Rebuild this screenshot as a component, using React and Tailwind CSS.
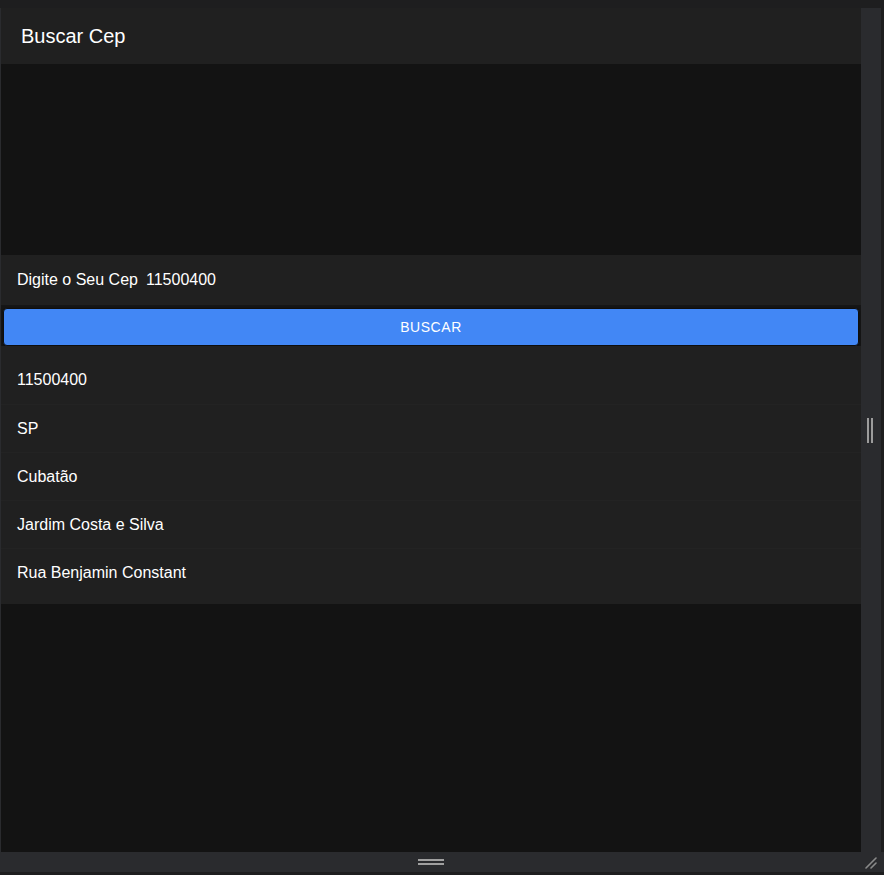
import React from 'react';

const items = ['11500400', 'SP', 'Cubatão', 'Jardim Costa e Silva', 'Rua Benjamin Constant'];

function App() {
  return (
    <div className="w-[884px] h-[875px] bg-[#1b1b1c] flex flex-col overflow-hidden font-['Liberation_Sans',Arial,sans-serif] text-white">
      {/* window top edge */}
      <div className="h-2 shrink-0 bg-[#1e1e1f]" />

      <div className="flex flex-1 min-h-0">
        <div className="w-px bg-[#2a2b2e]" />

        {/* app content */}
        <div className="w-[860px] flex flex-col bg-[#131313]">
          <header className="h-14 flex items-center px-5 bg-[#202020]">
            <h1 className="text-[20px] leading-none">Buscar Cep</h1>
          </header>

          <div className="h-[191px]" />

          <div className="h-[50px] flex items-center px-4 bg-[#202020] text-[16px]">
            <span>Digite o Seu Cep</span>
            <span className="ml-2">11500400</span>
          </div>

          <div className="px-[2px] pt-[3px] pb-0 bg-[#161616]">
            <button className="w-full h-[38px] rounded-[4px] border border-[#0e0e0e] bg-[#4287f5] text-[14px] tracking-[0.04em] text-white shadow-[0_1px_3px_rgba(0,0,0,0.6)]">
              BUSCAR
            </button>
          </div>

          <ul className="bg-[#202020] pt-[10px] pb-2">
            {items.map((t, i) => (
              <li
                key={t}
                className={'h-12 flex items-center px-4 text-[16px] ' + (i > 0 ? 'border-t border-[#232323]' : '')}
              >
                {t}
              </li>
            ))}
          </ul>

          <div className="flex-1" />
        </div>

        {/* vertical splitter */}
        <div className="w-5 bg-[#2a2b2e] flex items-center justify-center">
          <div className="flex gap-[2px] ml-[-2px]">
            <span className="w-[2px] h-[25px] bg-[#9c9c9c]" />
            <span className="w-[2px] h-[25px] bg-[#9c9c9c]" />
          </div>
        </div>
        <div className="w-[3px] bg-[#1e1e1f]" />
      </div>

      {/* horizontal splitter */}
      <div className="h-5 shrink-0 bg-[#2a2b2e] flex items-center relative">
        <div className="ml-[418px] flex flex-col gap-[2px]">
          <span className="block w-[26px] h-[2px] bg-[#a0a0a0]" />
          <span className="block w-[26px] h-[2px] bg-[#a0a0a0]" />
        </div>
        <svg className="absolute right-[6px] bottom-[3px]" width="14" height="14" viewBox="0 0 14 14">
          <path d="M2 13 L12 3 M7 13 L12 8" stroke="#8a8a8a" strokeWidth="1.6" strokeLinecap="round" />
        </svg>
      </div>
      <div className="h-[3px] shrink-0 bg-[#1e1e1f]" />
    </div>
  );
}

export default App;
